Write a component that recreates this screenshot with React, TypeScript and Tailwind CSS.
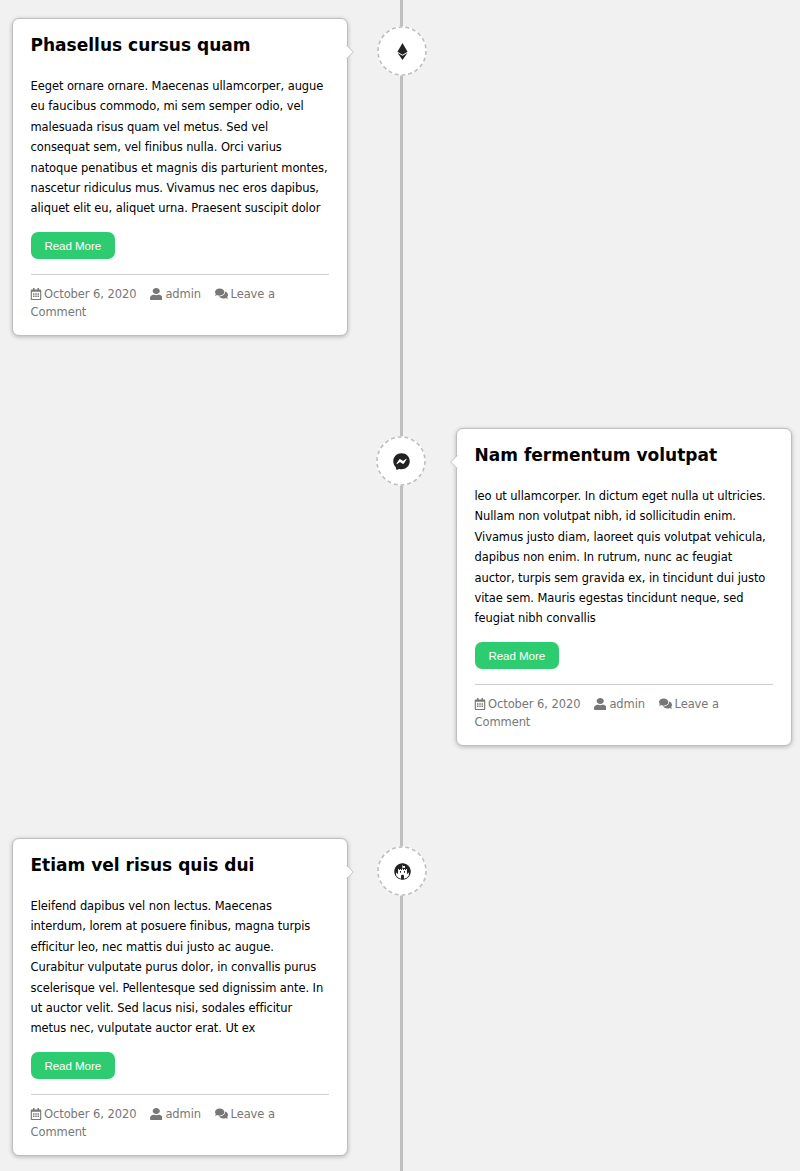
import type { IconType } from "react-icons";
import {
  FaComments,
  FaEthereum,
  FaFacebookMessenger,
  FaFortAwesomeAlt,
  FaRegCalendarAlt,
  FaUser,
} from "react-icons/fa";

type Side = "left" | "right";

interface Post {
  title: string;
  lines: string[];
  side: Side;
  icon: IconType;
}

const posts: Post[] = [
  {
    title: "Phasellus cursus quam",
    lines: [
      "Eeget ornare ornare. Maecenas ullamcorper, augue",
      "eu faucibus commodo, mi sem semper odio, vel",
      "malesuada risus quam vel metus. Sed vel",
      "consequat sem, vel finibus nulla. Orci varius",
      "natoque penatibus et magnis dis parturient montes,",
      "nascetur ridiculus mus. Vivamus nec eros dapibus,",
      "aliquet elit eu, aliquet urna. Praesent suscipit dolor",
    ],
    side: "left",
    icon: FaEthereum,
  },
  {
    title: "Nam fermentum volutpat",
    lines: [
      "leo ut ullamcorper. In dictum eget nulla ut ultricies.",
      "Nullam non volutpat nibh, id sollicitudin enim.",
      "Vivamus justo diam, laoreet quis volutpat vehicula,",
      "dapibus non enim. In rutrum, nunc ac feugiat",
      "auctor, turpis sem gravida ex, in tincidunt dui justo",
      "vitae sem. Mauris egestas tincidunt neque, sed",
      "feugiat nibh convallis",
    ],
    side: "right",
    icon: FaFacebookMessenger,
  },
  {
    title: "Etiam vel risus quis dui",
    lines: [
      "Eleifend dapibus vel non lectus. Maecenas",
      "interdum, lorem at posuere finibus, magna turpis",
      "efficitur leo, nec mattis dui justo ac augue.",
      "Curabitur vulputate purus dolor, in convallis purus",
      "scelerisque vel. Pellentesque sed dignissim ante. In",
      "ut auctor velit. Sed lacus nisi, sodales efficitur",
      "metus nec, vulputate auctor erat. Ut ex",
    ],
    side: "left",
    icon: FaFortAwesomeAlt,
  },
];

function Pointer({ side }: { side: Side }) {
  return (
    <svg
      viewBox="0 0 8 14"
      className={
        side === "left"
          ? "absolute top-[26px] -right-[7.5px] h-[14px] w-[8px]"
          : "absolute top-[26px] -left-[7.5px] h-[14px] w-[8px] -scale-x-100"
      }
    >
      <path d="M0 0 7 7 0 14Z" fill="#fff" />
      <path d="M.5 0 7.3 7 .5 14" fill="none" stroke="#c4c4c4" strokeWidth="1" />
    </svg>
  );
}

function Card({ post }: { post: Post }) {
  return (
    <article className="relative h-[318px] w-[335.5px] shrink-0 rounded-[7px] border border-[#bfbfbf] bg-white px-[17.5px] pt-[14px] shadow-[0_1px_4px_rgba(0,0,0,0.25)]">
      <Pointer side={post.side} />
      <h2 className="h-[24px] text-[17.02px] leading-[24px] font-bold whitespace-nowrap">{post.title}</h2>
      <p className="mt-[19px] text-[11.5px] leading-[20.4px] tracking-[-0.08px] whitespace-nowrap">
        {post.lines.map((line) => (
          <span key={line} className="block">
            {line}
          </span>
        ))}
      </p>
      <button className="mt-[13.4px] block h-[27px] w-[84.5px] rounded-[7px] bg-[#2ecc71] font-['Liberation_Sans',sans-serif] text-[11.6px] leading-[28px] tracking-[-0.08px] text-white">
        Read More
      </button>
      <footer className="mt-[14.6px] border-t border-[#cfcfcf] pt-[10px] text-[11.5px] leading-[18px] tracking-[-0.08px] whitespace-nowrap text-[#777]">
        <div className="flex items-center">
          <FaRegCalendarAlt className="mr-[2.2px] -ml-[0.7px] size-[12px]" />
          <span>October 6, 2020</span>
          <FaUser className="mr-[3px] ml-[13.5px] h-[12px] w-[12.5px]" preserveAspectRatio="none" />
          <span>admin</span>
          <FaComments className="mr-[2.5px] ml-[14px] size-[13px]" />
          <span>Leave a</span>
        </div>
        <div>Comment</div>
      </footer>
    </article>
  );
}

function Node({ icon: Icon }: { icon: IconType }) {
  return (
    <div className="relative mt-[8px] flex size-[50px] shrink-0 items-center justify-center text-[#222]">
      <svg viewBox="0 0 50 50" className="absolute inset-0 size-full">
        <circle cx="25" cy="25" r="24.7" fill="#fff" />
        <circle cx="25" cy="25" r="24" fill="none" stroke="#bdbdbd" strokeWidth="1.6" pathLength="100" strokeDasharray="2.6 1.947" />
      </svg>
      <Icon className="relative size-[17px]" />
    </div>
  );
}

export default function App() {
  return (
    <main className="relative h-[1171px] w-[800px] overflow-hidden bg-[#f1f1f1] pt-[18px] font-['DejaVu_Sans',sans-serif] text-black">
      <div className="absolute top-0 left-[400.4px] h-full w-[2.8px] bg-[#bfbfbf]" />
      {posts.map((post) => (
        <section
          key={post.title}
          className={
            post.side === "left"
              ? "relative flex h-[410px] items-start gap-[29.9px] pl-[12px]"
              : "relative flex h-[410px] items-start gap-[30px] pl-[376px]"
          }
        >
          {post.side === "left" && <Card post={post} />}
          <Node icon={post.icon} />
          {post.side === "right" && <Card post={post} />}
        </section>
      ))}
    </main>
  );
}
